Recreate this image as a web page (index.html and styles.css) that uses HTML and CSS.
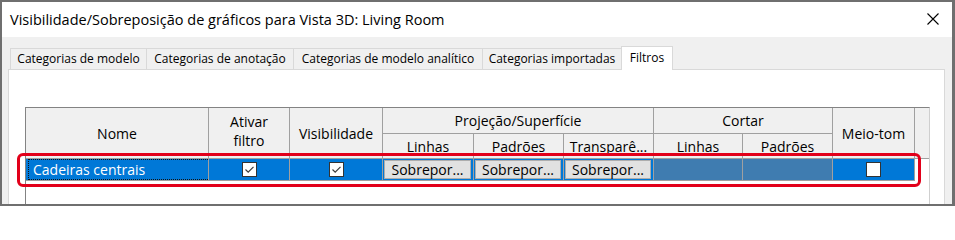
FILE: index.html
```html
<!DOCTYPE html>
<html lang="pt">
<head>
<meta charset="utf-8">
<title>Visibilidade/Sobreposição de gráficos</title>
<link rel="stylesheet" href="styles.css">
</head>
<body>
<div class="window">
  <div class="titlebar">
    <span class="title">Visibilidade/Sobreposição de gráficos para Vista 3D: Living Room</span>
    <svg class="close" width="12" height="12" viewBox="0 0 12 12"><path d="M0.5 0.5 L11.5 11.5 M11.5 0.5 L0.5 11.5" stroke="#000" stroke-width="1.1" fill="none"/></svg>
  </div>
  <div class="content">
    <div class="tabs">
      <div class="tab w1">Categorias de modelo</div>
      <div class="tab w2">Categorias de anotação</div>
      <div class="tab w3">Categorias de modelo analítico</div>
      <div class="tab w4">Categorias importadas</div>
      <div class="tab w5 active">Filtros</div>
    </div>
    <div class="panel">
      <div class="grid">
        <div class="hd span2 c-nome">Nome</div>
        <div class="hd span2 c-ativar">Ativar<br>filtro</div>
        <div class="hd span2 c-vis">Visibilidade</div>
        <div class="hd c-proj">Projeção/Superfície</div>
        <div class="hd c-cortar">Cortar</div>
        <div class="hd span2 c-meio">Meio-tom</div>
        <div class="hd span2 c-extra"></div>
        <div class="hd sub c-pl">Linhas</div>
        <div class="hd sub c-pp">Padrões</div>
        <div class="hd sub c-pt">Transparê...</div>
        <div class="hd sub c-cl">Linhas</div>
        <div class="hd sub c-cp">Padrões</div>

        <div class="cell sel name"><div class="focus">Cadeiras centrais</div></div>
        <div class="cell sel center"><span class="check"><svg width="13" height="13" viewBox="0 0 13 13"><path d="M2.5 6.5 L5.2 9.2 L10.5 3.8" stroke="#3c3c3c" stroke-width="1.2" fill="none"/></svg></span></div>
        <div class="cell sel center"><span class="check"><svg width="13" height="13" viewBox="0 0 13 13"><path d="M2.5 6.5 L5.2 9.2 L10.5 3.8" stroke="#3c3c3c" stroke-width="1.2" fill="none"/></svg></span></div>
        <div class="cell sel btncell"><span class="btn">Sobrepor...</span></div>
        <div class="cell sel btncell"><span class="btn">Sobrepor...</span></div>
        <div class="cell sel btncell"><span class="btn">Sobrepor...</span></div>
        <div class="cell dither"></div>
        <div class="cell dither"></div>
        <div class="cell sel center"><span class="check"></span></div>
        <div class="cell blank"></div>
      </div>
    </div>
  </div>
  <div class="highlight"></div>
</div>
</body>
</html>
```

FILE: styles.css
```css
html, body {
  margin: 0;
  padding: 0;
}
body {
  width: 955px;
  height: 206px;
  overflow: hidden;
  font-family: "Open Sans", "Noto Sans", "Liberation Sans", sans-serif;
  color: #000;
}
.window {
  position: relative;
  box-sizing: border-box;
  width: 955px;
  height: 206px;
  border: 2px solid #6f6f6f;
  border-right-width: 3px;
  background: #f0f0f0;
  display: flex;
  flex-direction: column;
  overflow: hidden;
}
.titlebar {
  height: 35px;
  flex: none;
  background: #fff;
  display: flex;
  align-items: center;
  justify-content: space-between;
  padding: 0 13px 0 8px;
}
.title {
  font-size: 14.5px;
  line-height: 18px;
  margin-top: 1px;
}
.close {
  display: block;
  margin-top: -1px;
}
.content {
  flex: 1;
  display: flex;
  flex-direction: column;
  padding: 9px 7px 0 6px;
  min-height: 0;
}
.tabs {
  display: flex;
  height: 23px;
  margin-left: 2px;
  flex: none;
  position: relative;
  z-index: 2;
}
.tab {
  box-sizing: border-box;
  height: 21px;
  margin-top: 2px;
  border: 1px solid #d9d9d9;
  border-bottom: none;
  background: #f0f0f0;
  font-size: 12px;
  line-height: 19px;
  text-align: center;
  white-space: nowrap;
  margin-left: -1px;
}
.tab:first-child { margin-left: 0; }
.w1 { width: 137px; }
.w2 { width: 148px; }
.w3 { width: 190px; }
.w4 { width: 140px; }
.w5 { width: 52px; }
.tab.active {
  background: #fff;
  margin-top: 0;
  height: 24px;
  line-height: 21px;
  position: relative;
  z-index: 3;
}
.panel {
  flex: 1;
  min-height: 0;
  background: #fff;
  border: 1px solid #d9d9d9;
  border-bottom: none;
  padding: 37px 0 0 16px;
  display: flex;
  flex-direction: column;
  position: relative;
  z-index: 1;
}
.grid {
  flex: 1;
  width: 903px;
  display: grid;
  grid-template-columns: 183px 81px 93px 91px 90px 90px 89px 90px 82px 14px;
  grid-template-rows: 26px 25px 22px;
  align-content: start;
  border-top: 1px solid #838383;
  border-left: 1px solid #838383;
  border-right: 1px solid #cfcfcf;
  font-size: 14px;
}
.hd, .cell {
  box-sizing: border-box;
  border-right: 1px solid #a0a0a0;
  border-bottom: 1px solid #a0a0a0;
  min-width: 0;
}
.hd {
  background: #f0f0f0;
  display: flex;
  align-items: center;
  justify-content: center;
  text-align: center;
  line-height: 19px;
  white-space: nowrap;
  overflow: hidden;
}
.span2 { grid-row: 1 / 3; }
.c-nome { grid-column: 1; }
.c-ativar { grid-column: 2; padding-bottom: 4px; }
.c-vis { grid-column: 3; }
.c-proj { grid-column: 4 / 7; grid-row: 1; }
.c-cortar { grid-column: 7 / 9; grid-row: 1; }
.c-meio { grid-column: 9; }
.c-extra { grid-column: 10; border-right: none; }
.sub { grid-row: 2; padding-top: 1px; }
.c-pl { grid-column: 4; }
.c-pp { grid-column: 5; }
.c-pt { grid-column: 6; }
.c-cl { grid-column: 7; }
.c-cp { grid-column: 8; }

.cell { grid-row: 3; }
.sel { background: #0078d7; }
.name {
  padding-left: 2px;
}
.focus {
  box-sizing: border-box;
  height: 100%;
  border: 1px dotted #111;
  border-right: none;
  color: #fff;
  padding-left: 4px;
  line-height: 19px;
  white-space: nowrap;
}
.center {
  display: flex;
  align-items: center;
  justify-content: center;
}
.check {
  box-sizing: border-box;
  width: 15px;
  height: 15px;
  background: #fff;
  border: 1px solid #333;
  display: flex;
  align-items: center;
  justify-content: center;
}
.check svg { display: block; }
.btncell {
  padding: 1px 2px 1px 1px;
}
.btn {
  box-sizing: border-box;
  display: block;
  height: 100%;
  background: #e1e1e1;
  border: 1px solid #adadad;
  text-align: center;
  line-height: 17px;
  white-space: nowrap;
}
.dither {
  background: #3f7cb0;
}
.blank {
  border: none;
  background: #fff;
}
.highlight {
  position: absolute;
  left: 15px;
  top: 151px;
  width: 904px;
  height: 34px;
  box-sizing: border-box;
  border: 3px solid #e2001a;
  border-radius: 6px;
  z-index: 5;
  pointer-events: none;
}
```
